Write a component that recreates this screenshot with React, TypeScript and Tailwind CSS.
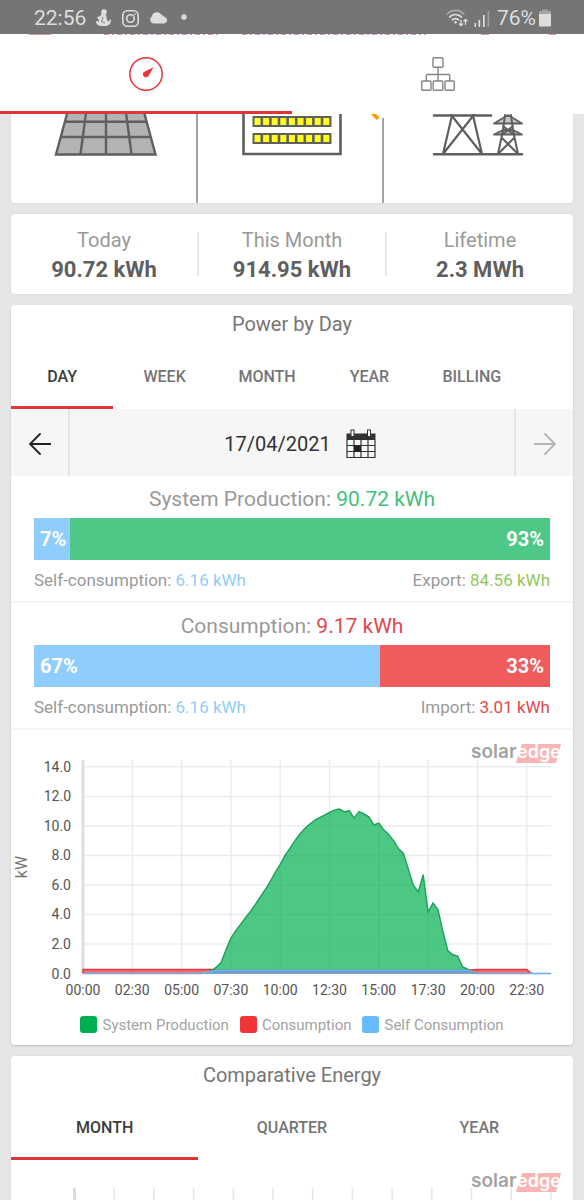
import React, { useState } from "react";

const production = [
  0.2, 0.42, 0.72, 1.6, 2.4, 2.9, 3.35, 3.8, 4.22, 4.7, 5.2, 5.7, 6.25, 6.85, 7.4, 8.0, 8.5, 9.0, 9.45, 9.83, 10.13,
  10.38, 10.56, 10.73, 10.91, 11.07, 11.14, 10.95, 11.04, 10.53, 10.97, 10.82, 10.6, 10.07, 10.19, 9.73, 9.42, 9.0,
  8.45, 8.13, 7.07, 5.99, 5.53, 6.7, 4.16, 4.77, 4.34, 2.85, 1.54, 1.27, 1.18, 0.45, 0.3, 0.05, 0,
];

const hours = ["00:00", "02:30", "05:00", "07:30", "10:00", "12:30", "15:00", "17:30", "20:00", "22:30"];
const levels = [0, 2, 4, 6, 8, 10, 12, 14];

// one slot is 15 minutes
const px = (slot: number) => 72 + slot * 4.93;
const py = (kw: number) => 245.5 - kw * 14.76;
const line = (points: number[][]) => points.map(([s, kw]) => `${px(s)},${py(kw)}`).join(" ");

const productionLine = line([[25, 0], ...production.map((kw, i) => [26 + i, kw])]);
const consumptionLine = line([[0, 0], [0, 0.27], [26, 0.27], [28, 0.22], [78, 0.22], [80, 0.27], [90, 0.27], [91, 0]]);
const selfLine = line([[0, 0], [24, 0], [27, 0.22], [78, 0.22], [80, 0], [95, 0]]);

function Logo({ y }: any) {
  return (
    <g transform={`translate(460 ${y})`} fontFamily="Inter, sans-serif" fontWeight="600" fontSize="19">
      <path d="M51 1H90L85 20H45Z" fill="#f9b4b4" />
      <text x="0" y="15" fill="#a3a3a3">solar</text>
      <text x="46" y="15" fontSize="18" fill="#ffffff">edge</text>
    </g>
  );
}

function Tabs({ name, items, className }: any) {
  const [active, setActive] = useState(items[0]);
  return (
    <div role="tablist" aria-label={name} className={`flex h-[66px] ${className}`}>
      {items.map((item: string) => (
        <button
          key={item}
          role="tab"
          aria-selected={item === active}
          onClick={() => setActive(item)}
          className={
            item === active
              ? "flex-1 border-b-3 border-[#e03438] pt-1 text-base font-medium text-[#3c3c3c]"
              : "flex-1 border-b-3 border-transparent pt-1 text-base font-medium text-[#757575]"
          }
        >
          {item}
        </button>
      ))}
    </div>
  );
}

function EnergyBar({ title, total, totalColor, left, right, rightColor, rightLabel, rightValue, rightText }: any) {
  return (
    <section className="border-b-2 border-[#f4f4f4] pt-1">
      <h3 className="text-center text-[21px] leading-[38px] text-[#999999]">
        {title}: <span className={totalColor}>{total}</span>
      </h3>
      <div className="mx-[23px] flex h-[42px] items-center text-xl font-bold text-white">
        <div className="flex h-full items-center bg-[#90cdff] pl-[6px]" style={{ width: `${left}%` }}>
          {left}%
        </div>
        <div className={`flex h-full flex-1 items-center justify-end pr-[6px] ${rightColor}`}>{right}%</div>
      </div>
      <div className="mx-[23px] flex h-[41px] items-center justify-between text-[17px] text-[#999999]">
        <p>
          Self-consumption: <span className="text-[#90cdf8]">6.16 kWh</span>
        </p>
        <p>
          {rightLabel}: <span className={rightText}>{rightValue}</span>
        </p>
      </div>
    </section>
  );
}

function StatusBar() {
  return (
    <div className="flex h-[34px] shrink-0 items-center justify-between bg-[#757575] pt-[2px] pr-[33px] pl-[34px] text-[#dedede]">
      <div className="flex items-center gap-[10px]">
        <span className="text-[21px] leading-8">22:56</span>
        <svg width="16" height="18" viewBox="0 0 16 18" fill="currentColor">
          <circle cx="8" cy="3" r="2.8" />
          <path d="M5.5 5L10 5.5L11 11L13 13L13.5 10.5L15 10.5C15 14 13.500 16.500 10 17H5C1 16.500 0 14.500 0 12L3 12.500L2.500 10Z" />
          <path d="M1 8L5 7L6 9L2 10Z" />
          <path d="M7 8L5.500 12.500L9 14" fill="none" stroke="#757575" strokeWidth="0.9" />
        </svg>
        <svg width="17" height="17" viewBox="0 0 17 17" fill="none" stroke="currentColor" strokeWidth="1.6">
          <rect x="0.8" y="0.8" width="15.400" height="15.400" rx="4.500" />
          <circle cx="8.500" cy="8.500" r="3.800" />
          <circle cx="12.800" cy="4.200" r="0.9" fill="currentColor" stroke="none" />
        </svg>
        <svg width="19" height="12" viewBox="0 0 19 12" fill="currentColor">
          <path d="M4 11.500A4 4 0 0 1 2.800 4.500A5.400 5.400 0 0 1 12.800 3A4 4 0 0 1 15.200 5A3.300 3.300 0 0 1 15.500 11.500Z" />
        </svg>
        <svg width="10" height="10" viewBox="0 0 10 10" fill="currentColor">
          <circle cx="6" cy="4" r="2.700" />
        </svg>
      </div>
      <div className="flex items-center">
        <svg width="22" height="18" viewBox="0 0 22 18" fill="none" stroke="currentColor" strokeWidth="1.700">
          <path d="M0.700 5.500C5.500 0 13.500 0 18.300 5.500" opacity="0.5" />
          <path d="M3.200 8.500C6.500 4.500 12.500 4.500 15.800 8.500M6 11.200C8 9 11 9 13 11.200" />
          <circle cx="9.500" cy="13.300" r="1.200" fill="currentColor" stroke="none" />
          <path d="M15 11V16.500M13 14.500L15 16.700L17 14.500M19.500 16V10.500M17.500 12.500L19.500 10.300L21.500 12.500" strokeWidth="1.200" />
        </svg>
        <svg className="ml-[6px]" width="16" height="17" viewBox="0 0 16 17" fill="currentColor">
          <path d="M0.500 13H2V17H0.500ZM4.500 10H6.200V17H4.500ZM9 5H10.700V17H9Z" />
          <path d="M13.500 1H15.200V17H13.500Z" opacity="0.400" />
        </svg>
        <span className="ml-[7px] text-[21px] leading-8">76%</span>
        <svg className="ml-[3px]" width="12" height="18" viewBox="0 0 12 18" fill="currentColor">
          <path d="M3 0.500H9V2H12V5.500H0V2H3Z" opacity="0.450" />
          <path d="M0 5H12V16.500Q12 17.500 11 17.500H1Q0 17.500 0 16.500Z" />
        </svg>
      </div>
    </div>
  );
}

function Header() {
  return (
    <header className="shrink-0 bg-white">
      <svg className="block h-px w-full" viewBox="0 0 584 1" preserveAspectRatio="none" stroke="#dd9a9b" strokeWidth="1">
        <path d="M29 0.500H51M481 0.500H489M549 0.500H556" />
        <path d="M104 0.500H219M242 0.500H426" strokeDasharray="5 3 2 3" />
      </svg>
      <nav className="flex h-[79px]">
        <button aria-label="Dashboard" className="flex flex-1 items-center justify-center border-b-3 border-[#e03438] pt-[2px]">
          <svg width="34" height="34" viewBox="0 0 34 34">
            <circle cx="17" cy="17" r="16.200" fill="none" stroke="#e8353a" strokeWidth="1.500" />
            <path d="M24.500 10.200L19.800 18.500C18.800 20.500 16 21 14.600 19.300C13.200 17.500 14 15.300 15.800 14.600Z" fill="#e8353a" />
          </svg>
        </button>
        <button aria-label="Layout" className="flex flex-1 items-center justify-center border-b-3 border-transparent pt-[2px]">
          <svg width="34" height="34" viewBox="0 0 34 34" fill="none" stroke="#858585" strokeWidth="1.400">
            <rect x="12" y="0.700" width="10" height="9.600" rx="1" />
            <rect x="0.700" y="24" width="9.300" height="9.300" rx="1" />
            <rect x="12.200" y="24" width="9.600" height="9.300" rx="1" />
            <rect x="24" y="24" width="9.300" height="9.300" rx="1" />
            <path d="M17 10.300V24M5.300 24V18.500Q5.300 17.500 6.300 17.500H27.700Q28.700 17.500 28.700 18.500V24" />
          </svg>
        </button>
      </nav>
    </header>
  );
}

function PowerFlow() {
  return (
    <div className="relative flex h-[89px] shrink-0 rounded-b-[4px] bg-white shadow-[0_0_2px_#cccccc]">
      <div className="flex w-1/3 justify-center border-r-2 border-[#a3a3a3] pl-1">
        <svg width="104" height="43" viewBox="0 0 104 43" fill="none" stroke="#5f5f5f" strokeWidth="2.400">
          <path d="M13.500 -2L2 40.500H101.500L90 -2Z" fill="#b3b3b3" />
          <path d="M11.500 7.700H92.500M7.500 23H96.500M32 -1L26.500 40M52 -1V40M72 -1L77.500 40" />
        </svg>
      </div>
      <div className="flex w-[33%] justify-center border-r-2 border-[#a3a3a3] pl-1">
        <svg width="100" height="43" viewBox="0 0 100 43">
          <path d="M1.500 -2V40H98.500V-2" fill="none" stroke="#5f5f5f" strokeWidth="2.600" />
          {[2, 19].map((y) => (
            <g key={y}>
              <rect x="10.500" y={y} width="79" height="11" fill="#5f5f5f" />
              {[0, 1, 2, 3, 4, 5, 6, 7, 8].map((i) => (
                <rect key={i} x={12.5 + i * 8.6} y={y + 2} width="6" height="7" fill="#ffff1a" />
              ))}
            </g>
          ))}
        </svg>
      </div>
      <div className="flex flex-1 justify-center">
        <svg width="92" height="43" viewBox="0 0 92 43" fill="none" stroke="#5f5f5f" strokeWidth="2.600" strokeLinecap="round" strokeLinejoin="round">
          <path d="M2 1.500H59M2 40.300H90" />
          <path d="M20 1.500L11 40M41 1.500L50 40M20 2L50 40M41 2L11 40M18 -1L21 3M43 -1L40 3" strokeWidth="2.200" />
          <path d="M76 1L62 9.500H90ZM71 16L62 20.500H90L81 16Z" fill="#5f5f5f" fillOpacity="0.35" strokeWidth="1.800" />
          <path d="M73 1L71 16L66 40M79 1L81 16L86 40M71 12L81 20M81 12L71 20M70 24L86 40M82 24L66 40" strokeWidth="2" />
        </svg>
      </div>
      <svg className="absolute top-0 left-[359px]" width="14" height="7" viewBox="0 0 14 7">
        <rect x="8" width="6" height="4" fill="#ffffff" />
        <path d="M1 0L6.500 6L9.500 3.500L6 0Z" fill="#ff9800" />
      </svg>
    </div>
  );
}

function Totals() {
  const totals = [
    ["Today", "90.72 kWh"],
    ["This Month", "914.95 kWh"],
    ["Lifetime", "2.3 MWh"],
  ];
  return (
    <dl className="flex shrink-0 divide-x-2 divide-[#e8e8e8] rounded-[4px] bg-white py-[18px] text-center shadow-[0_0_2px_#cccccc]">
      {totals.map(([label, value]) => (
        <div key={label} className="flex h-11 flex-1 flex-col items-center justify-center pt-[2px]">
          <dt className="text-xl leading-[29px] text-[#999999]">{label}</dt>
          <dd className="text-[22px] leading-[29px] font-bold text-[#5f5f5f]">{value}</dd>
        </div>
      ))}
    </dl>
  );
}

function PowerChart() {
  return (
    <svg className="block h-auto w-full" viewBox="0 2 562 274" fontFamily="Roboto, sans-serif" fontSize="14" fill="#555555">
      <g stroke="#ececec" strokeWidth="1.500">
        {levels.map((kw) => (
          <path key={kw} d={`M72 ${py(kw)}H540`} />
        ))}
        {hours.map((hour, i) => (
          <path key={hour} d={`M${px(i * 10)} 32V245`} />
        ))}
        <path d="M72 32V245" stroke="#dedede" strokeWidth="3" />
      </g>
      <polygon points={consumptionLine} fill="#f03438" fillOpacity="0.7" />
      <polyline points={consumptionLine} fill="none" stroke="#d83a3e" strokeWidth="1.400" />
      <polygon points={productionLine} fill="#00b050" fillOpacity="0.7" />
      <polyline points={productionLine} fill="none" stroke="#1ba05a" strokeWidth="1.400" />
      <polygon points={selfLine} fill="#6c9ee8" fillOpacity="0.900" />
      <polyline points={selfLine} fill="none" stroke="#74b0e6" strokeWidth="1.400" />
      <Logo y={15} />
      {levels.map((kw) => (
        <text key={kw} x="60" y={py(kw) + 5} textAnchor="end">{kw.toFixed(1)}</text>
      ))}
      {hours.map((hour, i) => (
        <text key={hour} x={px(i * 10)} y="267" textAnchor="middle">{hour}</text>
      ))}
      <text transform="translate(16 139) rotate(-90)" textAnchor="middle" fontSize="16" fill="#757575">kW</text>
    </svg>
  );
}

function PowerByDay() {
  return (
    <section className="shrink-0 rounded-[4px] bg-white shadow-[0_1px_2px_#bbbbbb]">
      <h2 className="text-center text-xl leading-[38px] text-[#757575]">Power by Day</h2>
      <Tabs name="Power by Day" items={["DAY", "WEEK", "MONTH", "YEAR", "BILLING"]} className="pr-[50px]" />
      <div className="flex h-[67px] bg-[#f6f6f6]">
        <button aria-label="Previous day" className="flex w-[59px] items-center justify-center border-r-2 border-[#e4e4e4] pt-[2px]">
          <svg width="22" height="22" viewBox="0 0 22 22" fill="none" stroke="#222222" strokeWidth="1.800" strokeLinecap="round">
            <path d="M21.500 11H1M11 1L1 11L11 21" />
          </svg>
        </button>
        <button className="flex flex-1 items-center justify-center gap-[15px] pt-[2px] pl-4 text-xl text-[#333333]">
          17/04/2021
          <svg width="30" height="30" viewBox="0 0 30 30">
            <path d="M1 11V28.500H29V11M1 16.500H29M1 22.500H29M8 11V28.500M15 11V28.500M22 11V28.500" fill="none" stroke="#333333" strokeWidth="1.200" />
            <rect x="0.500" y="4.500" width="29" height="6.500" fill="#333333" />
            <rect x="8" y="16.500" width="7" height="6" fill="#222222" />
            <rect x="5" y="1" width="3" height="6.500" fill="#ffffff" stroke="#333333" />
            <rect x="21.500" y="1" width="3" height="6.500" fill="#ffffff" stroke="#333333" />
          </svg>
        </button>
        <button aria-label="Next day" className="flex w-[59px] items-center justify-center border-l-2 border-[#e4e4e4] pt-[2px]">
          <svg width="22" height="22" viewBox="0 0 22 22" fill="none" stroke="#b5b5b5" strokeWidth="1.800" strokeLinecap="round">
            <path d="M0.500 11H21M11 1L21 11L11 21" />
          </svg>
        </button>
      </div>

      {/* Energy split */}
      <EnergyBar
        title="System Production"
        total="90.72 kWh"
        totalColor="text-[#43c07c]"
        left={7}
        right={93}
        rightColor="bg-[#4dc886]"
        rightLabel="Export"
        rightValue="84.56 kWh"
        rightText="text-[#93c65c]"
      />
      <EnergyBar
        title="Consumption"
        total="9.17 kWh"
        totalColor="text-[#e2474d]"
        left={67}
        right={33}
        rightColor="bg-[#f05b5b]"
        rightLabel="Import"
        rightValue="3.01 kWh"
        rightText="text-[#e2474d]"
      />

      <PowerChart />
      <ul className="flex h-[41px] justify-center gap-[11px] text-[15px] leading-[40px] text-[#a3a3a3]">
        <li className="flex items-center gap-[5px]"><span className="size-[17px] rounded-[3px] bg-[#00b050]" />System Production</li>
        <li className="flex items-center gap-[5px]"><span className="size-[17px] rounded-[3px] bg-[#f03438]" />Consumption</li>
        <li className="flex items-center gap-[5px]"><span className="size-[17px] rounded-[3px] bg-[#66bbff]" />Self Consumption</li>
      </ul>
    </section>
  );
}

function ComparativeEnergy() {
  return (
    <section className="shrink-0 rounded-[4px] bg-white shadow-[0_0_2px_#cccccc]">
      <h2 className="text-center text-xl leading-[38px] text-[#757575]">Comparative Energy</h2>
      <Tabs name="Comparative Energy" items={["MONTH", "QUARTER", "YEAR"]} className="" />
      <svg className="block h-auto w-full" viewBox="0 0 562 120" stroke="#e6e6e6" strokeWidth="1.500">
        <path d="M63.500 28V120" stroke="#dcdcdc" strokeWidth="3" />
        {[1, 2, 3, 4, 5, 6, 7, 8, 9, 10, 11, 12].map((i) => (
          <path key={i} d={`M${63.5 + i * 39.7} 28V120`} />
        ))}
        <g stroke="none">
          <Logo y={12} />
        </g>
      </svg>
    </section>
  );
}

export default function App() {
  return (
    <div className="flex h-screen flex-col overflow-hidden bg-[#e6e6e6] font-[Roboto,sans-serif]">
      <StatusBar />
      <Header />
      <main className="flex min-h-0 flex-1 flex-col gap-[11px] overflow-hidden px-[11px]">
        <PowerFlow />
        <Totals />
        <PowerByDay />
        <ComparativeEnergy />
      </main>
    </div>
  );
}
